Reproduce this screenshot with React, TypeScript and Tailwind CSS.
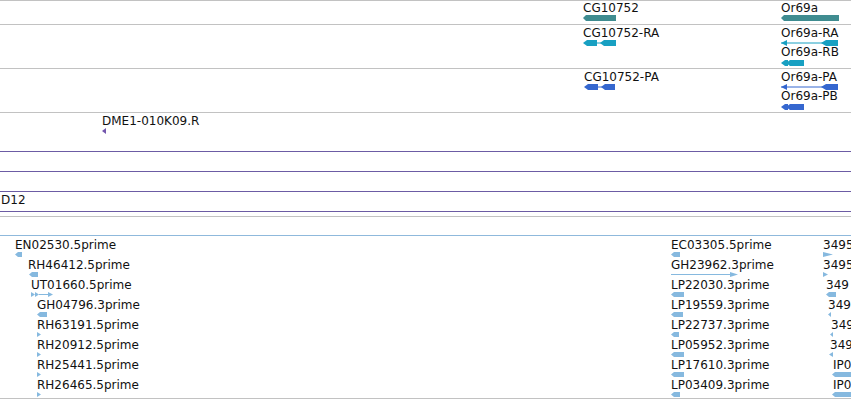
import React from "react";

type Shape = "lblock" | "rtri" | "ltri" | "rline" | "rarrows" | "gene" | "tx2" | "txline" | "tx1";

const FONT = { fontFamily: '"DejaVu Sans", "Liberation Sans", sans-serif' };

function Glyph({ shape, w, h, color }: { shape: Shape; w: number; h: number; color: string }) {
  const m = h / 2;
  let el: React.ReactNode = null;
  if (shape === "lblock" || shape === "gene") {
    el = <polygon points={`0,${m} 3,0 ${w},0 ${w},${h} 3,${h}`} fill={color} />;
  } else if (shape === "rtri") {
    el = <polygon points={`0,0 ${w},${m} 0,${h}`} fill={color} />;
  } else if (shape === "ltri") {
    el = <polygon points={`${w},0 0,${m} ${w},${h}`} fill={color} />;
  } else if (shape === "rline") {
    el = (
      <>
        <line x1={0} y1={m} x2={w - 4} y2={m} stroke={color} strokeWidth={1} />
        <polygon points={`${w - 8},0 ${w},${m} ${w - 8},${h}`} fill={color} />
      </>
    );
  } else if (shape === "rarrows") {
    el = (
      <>
        <polygon points={`0,0 4,${m} 0,${h}`} fill={color} />
        <polygon points={`4,0 8,${m} 4,${h}`} fill={color} />
        <line x1={8} y1={m} x2={w - 4} y2={m} stroke={color} strokeWidth={1} />
        <polygon points={`${w - 5},0 ${w},${m} ${w - 5},${h}`} fill={color} />
      </>
    );
  } else if (shape === "tx2") {
    el = (
      <>
        <polygon points={`0,${m} 4,0 14,0 14,${h} 4,${h}`} fill={color} />
        <line x1={14} y1={m} x2={19} y2={m} stroke={color} strokeWidth={1} />
        <polygon points={`17,${m} 21,0 ${w},0 ${w},${h} 21,${h}`} fill={color} />
      </>
    );
  } else if (shape === "txline") {
    el = (
      <>
        <polygon points={`0,${m} 6,${m - 3} 6,${m + 3}`} fill={color} />
        <line x1={0} y1={m} x2={w - 14} y2={m} stroke={color} strokeWidth={1} />
        <polygon points={`${w - 17},${m} ${w - 12},0 ${w},0 ${w},${h} ${w - 12},${h}`} fill={color} />
      </>
    );
  } else if (shape === "tx1") {
    el = (
      <>
        <polygon points={`0,${m} 4,0 7,0 7,${h} 4,${h}`} fill={color} />
        <polygon points={`5,${m} 9,0 ${w},0 ${w},${h} 9,${h}`} fill={color} />
      </>
    );
  }
  return (
    <svg width={w} height={h} viewBox={`0 0 ${w} ${h}`} className="block">
      {el}
    </svg>
  );
}

type Feat = { label?: string; lx: number; ly: number; gx: number; gy: number; shape: Shape; w: number; h: number };

function Feature({ f, color }: { f: Feat; color: string }) {
  return (
    <>
      {f.label && (
        <div className="absolute whitespace-nowrap text-[12px] leading-[14px] text-[#111]" style={{ left: f.lx, top: f.ly }}>
          {f.label}
        </div>
      )}
      <div className="absolute" style={{ left: f.gx, top: f.gy }}>
        <Glyph shape={f.shape} w={f.w} h={f.h} color={color} />
      </div>
    </>
  );
}

const TEAL = "#3f8c90";
const CYAN = "#18a0c2";
const BLUE = "#3567cf";
const PURPLE = "#7356ad";
const EST = "#86b9df";

const genes: Feat[] = [
  { label: "CG10752", lx: 583, ly: 0, gx: 583, gy: 14, shape: "gene", w: 33, h: 6 },
  { label: "Or69a", lx: 781, ly: 0, gx: 781, gy: 14, shape: "gene", w: 58, h: 6 },
];
const mrnas: Feat[] = [
  { label: "CG10752-RA", lx: 583, ly: 1, gx: 583, gy: 15, shape: "tx2", w: 33, h: 6 },
  { label: "Or69a-RA", lx: 781, ly: 1, gx: 781, gy: 15, shape: "txline", w: 57, h: 6 },
  { label: "Or69a-RB", lx: 781, ly: 20, gx: 781, gy: 35, shape: "tx1", w: 23, h: 6 },
];
const prots: Feat[] = [
  { label: "CG10752-PA", lx: 584, ly: 1, gx: 584, gy: 15, shape: "tx2", w: 31, h: 6 },
  { label: "Or69a-PA", lx: 781, ly: 1, gx: 781, gy: 15, shape: "txline", w: 57, h: 6 },
  { label: "Or69a-PB", lx: 781, ly: 20, gx: 781, gy: 35, shape: "tx1", w: 23, h: 6 },
];

const estRows: [string, number, Shape, number, number, number][] = [
  ["EN02530.5prime", 15, "lblock", 15, 7, 5],
  ["RH46412.5prime", 28, "lblock", 29, 9, 5],
  ["UT01660.5prime", 31, "rarrows", 31, 22, 5],
  ["GH04796.3prime", 37, "lblock", 37, 10, 5],
  ["RH63191.5prime", 37, "rtri", 37, 4, 5],
  ["RH20912.5prime", 37, "rtri", 37, 4, 5],
  ["RH25441.5prime", 37, "rtri", 37, 4, 5],
  ["RH26465.5prime", 37, "rtri", 37, 4, 5],
];
const estMid: [string, number, Shape, number, number, number][] = [
  ["EC03305.5prime", 671, "lblock", 671, 9, 5],
  ["GH23962.3prime", 671, "rline", 671, 67, 5],
  ["LP22030.3prime", 671, "lblock", 671, 13, 5],
  ["LP19559.3prime", 671, "lblock", 671, 12, 5],
  ["LP22737.3prime", 671, "lblock", 671, 8, 5],
  ["LP05952.3prime", 671, "lblock", 671, 13, 5],
  ["LP17610.3prime", 671, "lblock", 671, 13, 5],
  ["LP03409.3prime", 671, "lblock", 671, 9, 5],
];
const estRight: [string, number, Shape, number, number, number][] = [
  ["3495", 823, "rtri", 823, 10, 5],
  ["3495", 823, "rtri", 823, 5, 5],
  ["349", 826, "lblock", 826, 10, 5],
  ["349", 828, "ltri", 828, 3, 5],
  ["349", 831, "ltri", 830, 3, 5],
  ["349", 830, "ltri", 829, 4, 5],
  ["IP0", 833, "lblock", 832, 19, 5],
  ["IP0", 833, "lblock", 832, 19, 5],
];

function toFeats(rows: [string, number, Shape, number, number, number][]): Feat[] {
  return rows.map(([label, lx, shape, gx, w, h], i) => ({
    label,
    lx,
    ly: 2 + i * 20,
    gx,
    gy: 16 + i * 20,
    shape,
    w,
    h,
  }));
}

export default function App() {
  return (
    <div className="w-[851px] h-[400px] overflow-hidden bg-white relative" style={FONT}>
      <div className="relative h-[24px] border-t border-[#c2c2c2]">
        {genes.map((f, i) => (
          <Feature key={i} f={f} color={TEAL} />
        ))}
      </div>
      <div className="relative h-[44px] border-t border-[#c2c2c2]">
        {mrnas.map((f, i) => (
          <Feature key={i} f={f} color={CYAN} />
        ))}
      </div>
      <div className="relative h-[44px] border-t border-[#c2c2c2]">
        {prots.map((f, i) => (
          <Feature key={i} f={f} color={BLUE} />
        ))}
      </div>
      <div className="relative h-[39px] border-t border-[#c2c2c2]">
        <Feature f={{ label: "DME1-010K09.R", lx: 102, ly: 1, gx: 102, gy: 15, shape: "ltri", w: 4, h: 6 }} color={PURPLE} />
      </div>
      <div className="h-[20px] border-t border-[#6c5ca4]" />
      <div className="h-[20px] border-t border-[#6c5ca4]" />
      <div className="relative h-[21px] border-y border-[#6c5ca4]">
        <div className="absolute left-[1px] top-[1px] text-[12px] leading-[14px] text-[#111]">D12</div>
      </div>
      <div className="h-[4px]" />
      <div className="h-[19px] border-t border-[#c2c2c2]" />
      <div className="relative h-[163px] border-t border-[#8fb9dc] overflow-hidden">
        {toFeats(estRows).map((f, i) => (
          <Feature key={"a" + i} f={f} color={EST} />
        ))}
        {toFeats(estMid).map((f, i) => (
          <Feature key={"b" + i} f={f} color={EST} />
        ))}
        {toFeats(estRight).map((f, i) => (
          <Feature key={"c" + i} f={f} color={EST} />
        ))}
      </div>
      <div className="h-[2px] border-t border-[#c2c2c2]" />
    </div>
  );
}
